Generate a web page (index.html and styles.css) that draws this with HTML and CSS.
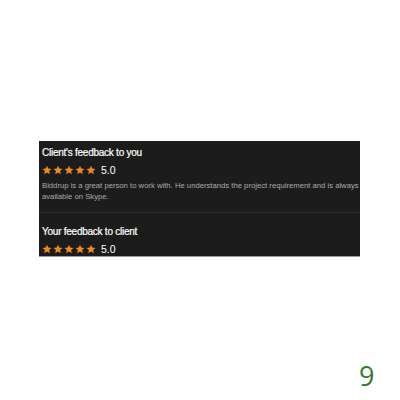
FILE: index.html
```html
<!DOCTYPE html>
<html lang="en">
<head>
  <title>Feedback</title>
  <meta charset="UTF-8">
  <meta name="viewport" content="width=device-width, initial-scale=1">
  <link rel="stylesheet" href="styles.css">
</head>
<body>
  <div class="page">
    <div class="feedback-card">
      <div class="feedback-block">
        <h3 class="feedback-title">Client's feedback to you</h3>
        <div class="rating">
          <div class="stars">
            <svg viewBox="0 0 24 24"><path d="M12 1.5l3.1 7.1 7.7.7-5.8 5.1 1.7 7.6L12 18l-6.7 4 1.7-7.6-5.8-5.1 7.7-.7z"/></svg>
            <svg viewBox="0 0 24 24"><path d="M12 1.5l3.1 7.1 7.7.7-5.8 5.1 1.7 7.6L12 18l-6.7 4 1.7-7.6-5.8-5.1 7.7-.7z"/></svg>
            <svg viewBox="0 0 24 24"><path d="M12 1.5l3.1 7.1 7.7.7-5.8 5.1 1.7 7.6L12 18l-6.7 4 1.7-7.6-5.8-5.1 7.7-.7z"/></svg>
            <svg viewBox="0 0 24 24"><path d="M12 1.5l3.1 7.1 7.7.7-5.8 5.1 1.7 7.6L12 18l-6.7 4 1.7-7.6-5.8-5.1 7.7-.7z"/></svg>
            <svg viewBox="0 0 24 24"><path d="M12 1.5l3.1 7.1 7.7.7-5.8 5.1 1.7 7.6L12 18l-6.7 4 1.7-7.6-5.8-5.1 7.7-.7z"/></svg>
          </div>
          <span class="score">5.0</span>
        </div>
        <p class="feedback-text">Biddrup is a great person to work with. He understands the project requirement and is always available on Skype.</p>
      </div>
      <div class="feedback-block last">
        <h3 class="feedback-title">Your feedback to client</h3>
        <div class="rating">
          <div class="stars">
            <svg viewBox="0 0 24 24"><path d="M12 1.5l3.1 7.1 7.7.7-5.8 5.1 1.7 7.6L12 18l-6.7 4 1.7-7.6-5.8-5.1 7.7-.7z"/></svg>
            <svg viewBox="0 0 24 24"><path d="M12 1.5l3.1 7.1 7.7.7-5.8 5.1 1.7 7.6L12 18l-6.7 4 1.7-7.6-5.8-5.1 7.7-.7z"/></svg>
            <svg viewBox="0 0 24 24"><path d="M12 1.5l3.1 7.1 7.7.7-5.8 5.1 1.7 7.6L12 18l-6.7 4 1.7-7.6-5.8-5.1 7.7-.7z"/></svg>
            <svg viewBox="0 0 24 24"><path d="M12 1.5l3.1 7.1 7.7.7-5.8 5.1 1.7 7.6L12 18l-6.7 4 1.7-7.6-5.8-5.1 7.7-.7z"/></svg>
            <svg viewBox="0 0 24 24"><path d="M12 1.5l3.1 7.1 7.7.7-5.8 5.1 1.7 7.6L12 18l-6.7 4 1.7-7.6-5.8-5.1 7.7-.7z"/></svg>
          </div>
          <span class="score">5.0</span>
        </div>
      </div>
    </div>
    <div class="page-number">9</div>
  </div>
</body>
</html>
```

FILE: styles.css
```css
body {
  margin: 0;
  padding: 0;
  background-color: #fff;
  font-family: "Liberation Sans", Arial, sans-serif;
}

.page {
  width: 400px;
  height: 400px;
  padding-top: 141px;
  box-sizing: border-box;
}

.feedback-card {
  margin-left: 39px;
  width: 321px;
  height: 116px;
  background-color: #1c1c1c;
  border-bottom: 1px solid #9a9a9a;
  box-sizing: border-box;
  overflow: hidden;
  color: #fff;
}

.feedback-block {
  padding: 5px 0 5px 3px;
  border-bottom: 1px solid #2c2c2c;
  height: 72px;
  box-sizing: border-box;
}

.feedback-block.last {
  border-bottom: none;
  padding-top: 12px;
}

.feedback-title {
  margin: 0;
  font-size: 10px;
  font-weight: normal;
  line-height: 13px;
  letter-spacing: -0.25px;
  -webkit-text-stroke: 0.2px #fff;
}

.rating {
  display: flex;
  align-items: center;
  gap: 5px;
  margin-top: 5px;
  height: 12px;
}

.stars {
  display: flex;
  gap: 1px;
}

.stars svg {
  width: 10px;
  height: 10px;
  fill: #ec8a1e;
}

.score {
  font-size: 10.5px;
  line-height: 12px;
}

.feedback-text {
  margin: 4px 0 0;
  width: 330px;
  font-size: 7.7px;
  line-height: 11px;
  color: #ababab;
}

.page-number {
  margin-top: 104px;
  margin-left: 359px;
  font-family: "Open Sans", sans-serif;
  font-size: 27px;
  line-height: 30px;
  color: #2f7d32;
}
```
